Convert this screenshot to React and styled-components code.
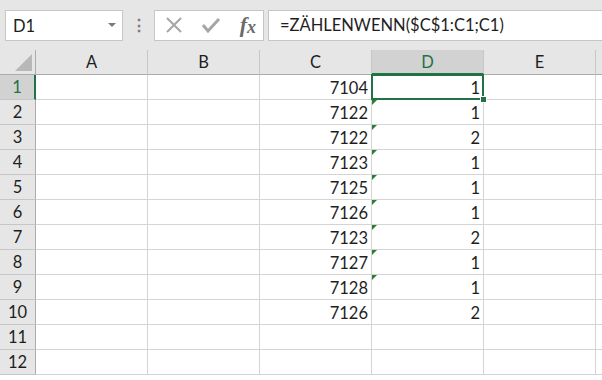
import React from "react";
import styled, { createGlobalStyle } from "styled-components";

const GlobalStyle = createGlobalStyle`
  html, body {
    margin: 0;
    padding: 0;
    background: #fff;
  }
  body {
    font-family: Lato, "Open Sans", "Liberation Sans", sans-serif;
  }
`;

const columns = ["A", "B", "C", "D", "E"];

const rows = [
  [7104, 1],
  [7122, 1],
  [7122, 2],
  [7123, 1],
  [7125, 1],
  [7126, 1],
  [7123, 2],
  [7127, 1],
  [7128, 1],
  [7126, 2],
  null,
  null,
];

const App = () => {
  return (
    <>
      <GlobalStyle />
      <Window>
        <Toolbar>
          <NameBox>
            <span>D1</span>
            <DropArrow />
          </NameBox>
          <Dots>⋮</Dots>
          <IconBox>
            <svg width="18" height="18" viewBox="0 0 18 18">
              <path d="M2 2 L16 16 M16 2 L2 16" stroke="#a6a6a6" strokeWidth="2" fill="none" />
            </svg>
            <svg width="20" height="18" viewBox="0 0 20 18">
              <path d="M2 9 L7 15 L18 3" stroke="#a6a6a6" strokeWidth="3" fill="none" />
            </svg>
            <Fx>
              f<sub>x</sub>
            </Fx>
          </IconBox>
          <FormulaInput>=ZÄHLENWENN($C$1:C1;C1)</FormulaInput>
        </Toolbar>

        <Grid>
          <Corner>
            <CornerTriangle />
          </Corner>
          {columns.map((c) => (
            <ColHead key={c} active={c === "D"}>
              {c}
            </ColHead>
          ))}
          <ColHead $last />

          {rows.map((r, i) => (
            <React.Fragment key={i}>
              <RowHead active={i === 0}>{i + 1}</RowHead>
              <Cell />
              <Cell />
              <Cell>{r ? r[0] : ""}</Cell>
              <Cell selected={i === 0} flagged={i > 0 && i < 9}>
                {r ? r[1] : ""}
              </Cell>
              <Cell />
              <Cell $last />
            </React.Fragment>
          ))}
        </Grid>
      </Window>
    </>
  );
};

const Window = styled.div`
  width: 602px;
  height: 380px;
  overflow: hidden;
  background: #fff;
`;

const Toolbar = styled.div`
  height: 50px;
  box-sizing: border-box;
  background: #e6e6e6;
  display: flex;
  align-items: center;
  padding: 0 0 0 5px;
  font-size: 16.5px;
  color: #1e1e1e;
`;

const NameBox = styled.div`
  width: 118px;
  height: 31px;
  box-sizing: border-box;
  background: #fff;
  border: 1px solid #c6c6c6;
  display: flex;
  align-items: center;
  justify-content: space-between;
  padding: 0 6px 0 7px;
  span {
    margin-top: 1px;
  }
`;

const DropArrow = styled.div`
  width: 0;
  height: 0;
  border-left: 4px solid transparent;
  border-right: 4px solid transparent;
  border-top: 4px solid #7a7a7a;
`;

const Dots = styled.div`
  width: 31px;
  text-align: center;
  color: #7a7a7a;
  font-size: 16px;
  font-weight: bold;
`;

const IconBox = styled.div`
  width: 110px;
  height: 31px;
  box-sizing: border-box;
  background: #fff;
  border: 1px solid #c6c6c6;
  display: flex;
  align-items: center;
  justify-content: space-between;
  padding: 0 7px 0 10px;
`;

const Fx = styled.span`
  font-family: "Liberation Serif", "DejaVu Serif", serif;
  font-style: italic;
  font-weight: bold;
  font-size: 22px;
  color: #6a6a6a;
  line-height: 1;
  sub {
    font-size: 18px;
    vertical-align: -1px;
  }
`;

const FormulaInput = styled.div`
  flex: 1;
  height: 31px;
  box-sizing: border-box;
  margin-left: 4px;
  background: #fff;
  border: 1px solid #c6c6c6;
  border-right: none;
  display: flex;
  align-items: center;
  padding-left: 11px;
`;

const Grid = styled.div`
  display: grid;
  grid-template-columns: 36px 112px 112px 112px 112px 112px 1fr;
  grid-auto-rows: 25px;
  font-size: 16.5px;
  color: #1e1e1e;
`;

const Corner = styled.div`
  background: #e6e6e6;
  border-right: 1px solid #ababab;
  border-bottom: 1px solid #ababab;
  box-sizing: border-box;
  display: flex;
  align-items: flex-end;
  justify-content: flex-end;
  padding: 0 3px 3px 0;
`;

const CornerTriangle = styled.div`
  width: 0;
  height: 0;
  border-left: 17px solid transparent;
  border-bottom: 17px solid #b8b8b8;
`;

const ColHead = styled.div`
  box-sizing: border-box;
  background: ${(p) => (p.active ? "#d2d2d2" : "#e6e6e6")};
  color: ${(p) => (p.active ? "#217346" : "#1e1e1e")};
  border-right: ${(p) => (p.$last ? "none" : "1px solid #c6c6c6")};
  border-bottom: ${(p) => (p.active ? "2px solid #217346" : "1px solid #ababab")};
  display: flex;
  align-items: center;
  justify-content: center;
`;

const RowHead = styled.div`
  box-sizing: border-box;
  background: ${(p) => (p.active ? "#d2d2d2" : "#e6e6e6")};
  color: ${(p) => (p.active ? "#217346" : "#1e1e1e")};
  border-right: ${(p) => (p.active ? "2px solid #217346" : "1px solid #ababab")};
  border-bottom: 1px solid #c6c6c6;
  display: flex;
  align-items: center;
  justify-content: center;
`;

const Cell = styled.div`
  position: relative;
  box-sizing: border-box;
  border-right: ${(p) => (p.$last ? "none" : "1px solid #d4d4d4")};
  border-bottom: 1px solid #d4d4d4;
  display: flex;
  align-items: center;
  justify-content: flex-end;
  padding: 1px 3px 0 0;

  ${(p) =>
    p.flagged &&
    `
    &::before {
      content: "";
      position: absolute;
      left: 0;
      top: 0;
      border-top: 5px solid #2e7d32;
      border-right: 5px solid transparent;
    }
  `}

  ${(p) =>
    p.selected &&
    `
    &::after {
      content: "";
      position: absolute;
      left: -1px;
      top: -1px;
      right: -1px;
      bottom: -1px;
      border: 2px solid #217346;
      z-index: 2;
    }
    &::before {
      content: "";
      position: absolute;
      right: -4px;
      bottom: -4px;
      width: 5px;
      height: 5px;
      background: #217346;
      border: 1px solid #fff;
      z-index: 3;
    }
  `}
`;

export default App;
